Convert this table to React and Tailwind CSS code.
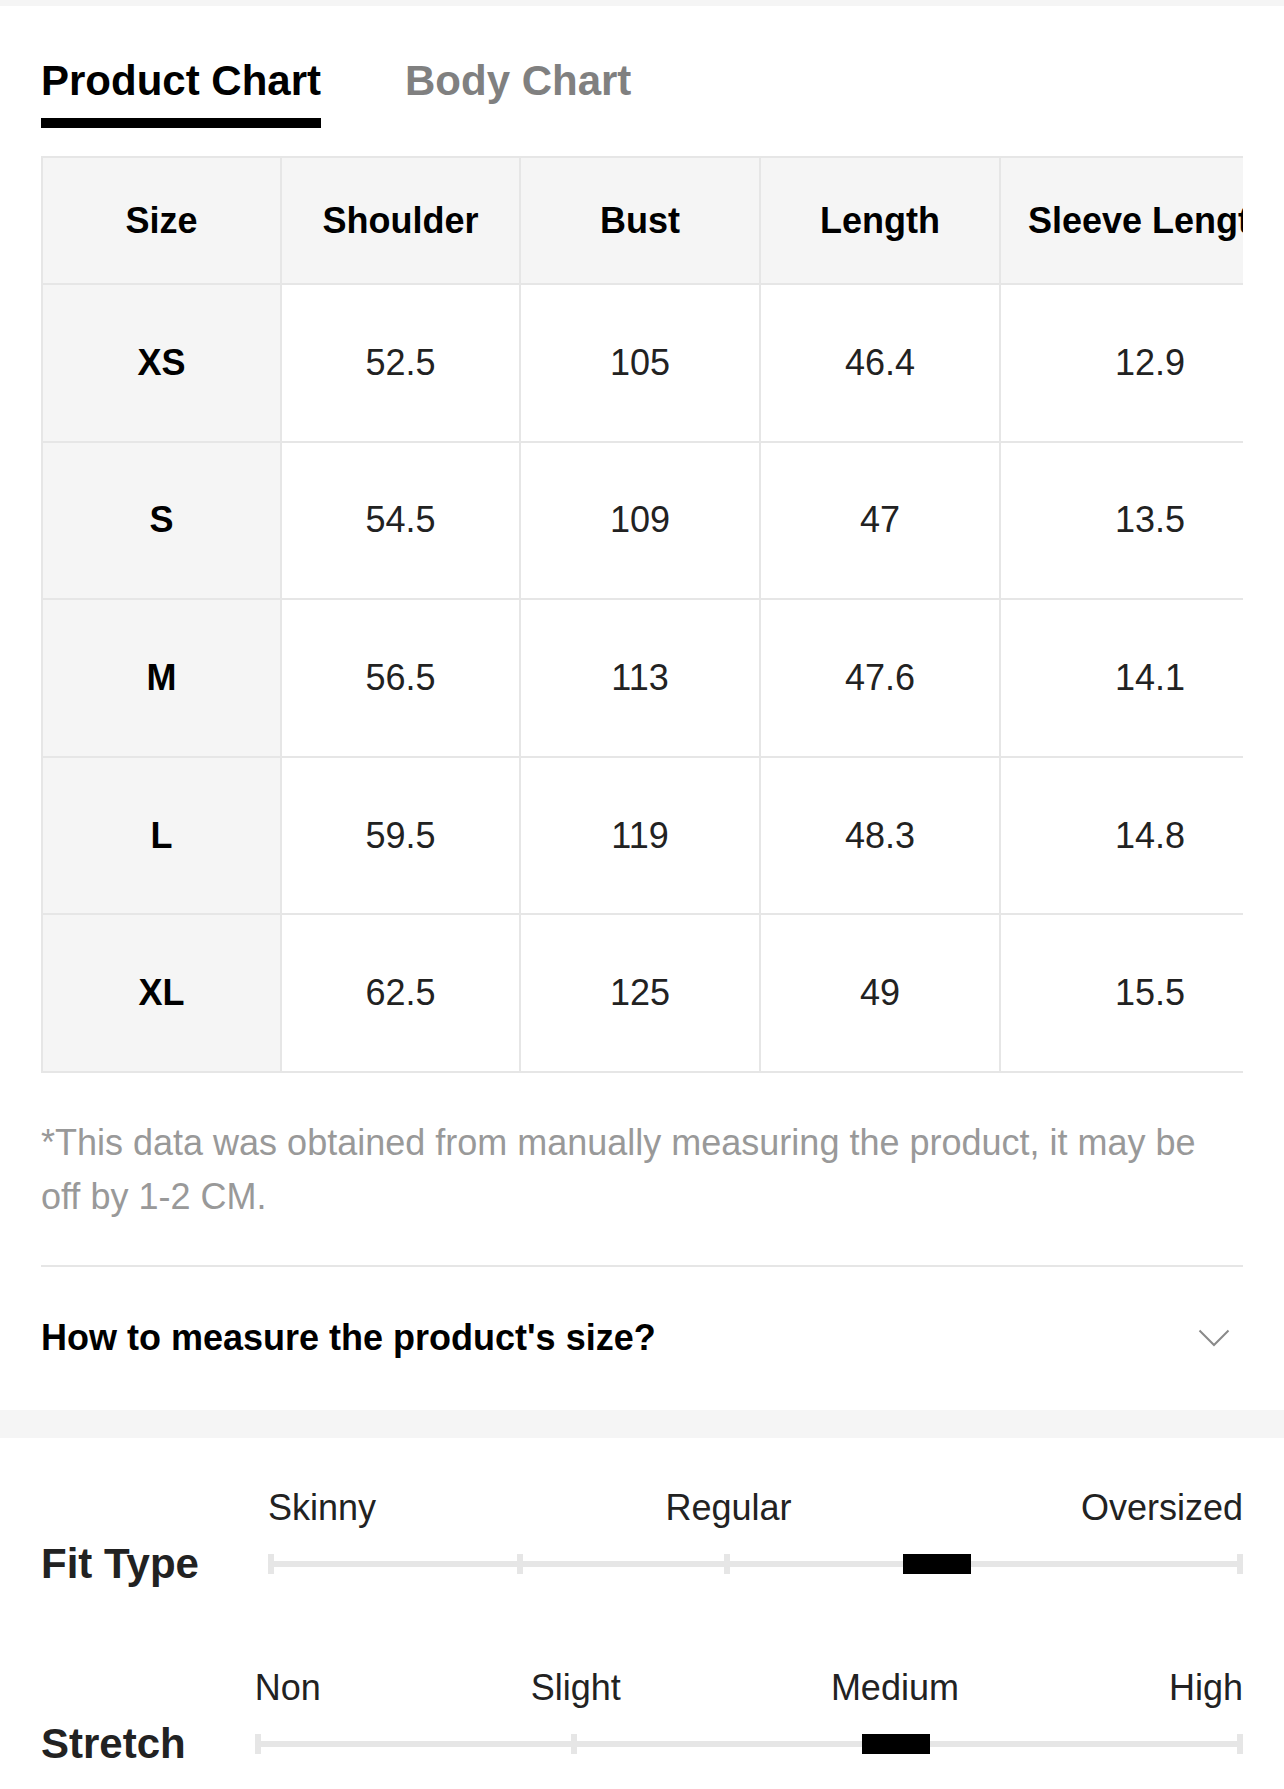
import React from 'react';

const columns = ['Size', 'Shoulder', 'Bust', 'Length', 'Sleeve Length'];
const colWidths = ['w-[239px]', 'w-[239px]', 'w-[240px]', 'w-[240px]', 'w-[300px]'];

const rows = [
  ['XS', '52.5', '105', '46.4', '12.9'],
  ['S', '54.5', '109', '47', '13.5'],
  ['M', '56.5', '113', '47.6', '14.1'],
  ['L', '59.5', '119', '48.3', '14.8'],
  ['XL', '62.5', '125', '49', '15.5'],
];

const scales = [
  { title: 'Fit Type', labels: ['Skinny', 'Regular', 'Oversized'], ticks: [0, 25.7, 47.1, 100], marker: 65.1 },
  { title: 'Stretch', labels: ['Non', 'Slight', 'Medium', 'High'], ticks: [0, 32.2, 100], marker: 61.4 },
];

function Scale({ title, labels, ticks, marker }) {
  return (
    <div className="flex items-end gap-[69px]">
      <div className="h-[40px] flex items-center text-[42px] font-bold leading-none text-[#222] whitespace-nowrap">{title}</div>
      <div className="flex-1">
        <div className="flex justify-between text-[36px] leading-none text-[#222]">
          {labels.map((label) => (
            <span key={label}>{label}</span>
          ))}
        </div>
        <div className="relative mt-[18px] h-[40px]">
          <div className="absolute inset-x-0 top-1/2 -translate-y-1/2 h-[6px] bg-[#e6e6e6]" />
          {ticks.map((t) => (
            <div
              key={t}
              className="absolute top-1/2 -translate-y-1/2 w-[6px] h-[20px] bg-[#e6e6e6]"
              style={{ left: `calc(${t}% - ${(t / 100) * 6}px)` }}
            />
          ))}
          <div
            className="absolute top-1/2 -translate-y-1/2 w-[68px] h-[20px] bg-black"
            style={{ left: `${marker}%` }}
          />
        </div>
      </div>
    </div>
  );
}

export default function App() {
  return (
    <div className="min-h-screen bg-white font-['Liberation_Sans',Arial,sans-serif]">
      <div className="h-[6px] bg-[#f5f5f5]" />

      <div className="px-[41px]">
        {/* Tabs */}
        <div className="flex gap-[84px] pt-[54px]">
          <div className="flex flex-col">
            <span className="text-[42px] font-bold leading-none text-black whitespace-nowrap">Product Chart</span>
            <div className="mt-[16px] h-[10px] bg-black" />
          </div>
          <span className="text-[42px] font-bold leading-none text-[#808080] whitespace-nowrap">Body Chart</span>
        </div>

        {/* Size table */}
        <div className="mt-[28px] overflow-hidden">
          <table className="table-fixed border-collapse w-[1258px]">
            <colgroup>
              {colWidths.map((w, i) => (
                <col key={i} className={w} />
              ))}
            </colgroup>
            <thead>
              <tr className="h-[127px]">
                {columns.map((c) => (
                  <th
                    key={c}
                    className="border-2 border-[#e6e6e6] bg-[#f5f5f5] text-[36px] font-bold text-black text-center whitespace-nowrap"
                  >
                    {c}
                  </th>
                ))}
              </tr>
            </thead>
            <tbody>
              {rows.map((row) => (
                <tr key={row[0]} className="h-[157.6px]">
                  {row.map((cell, i) => (
                    <td
                      key={i}
                      className={`border-2 border-[#e6e6e6] text-[36px] text-center ${
                        i === 0 ? 'bg-[#f5f5f5] font-bold text-black' : 'bg-white text-[#222]'
                      }`}
                    >
                      {cell}
                    </td>
                  ))}
                </tr>
              ))}
            </tbody>
          </table>
        </div>

        <p className="mt-[43px] pr-[40px] text-[36px] leading-[54px] text-[#999]">
          *This data was obtained from manually measuring the product, it may be off by 1-2 CM.
        </p>

        <div className="mt-[41px] h-[2px] bg-[#e6e6e6]" />

        <div className="h-[143px] flex items-center justify-between">
          <span className="text-[36px] font-bold text-black leading-none">How to measure the product's size?</span>
          <svg width="32" height="18" viewBox="0 0 32 18" className="mr-[13px]">
            <polyline points="1.5,1.5 16,16 30.5,1.5" fill="none" stroke="#8a8a8a" strokeWidth="2" />
          </svg>
        </div>
      </div>

      <div className="h-[28px] bg-[#f5f5f5]" />

      {/* Fit scales */}
      <div className="px-[41px] pt-[52px] pb-[40px] flex flex-col gap-[86px]">
        {scales.map((s) => (
          <Scale key={s.title} {...s} />
        ))}
      </div>
    </div>
  );
}
